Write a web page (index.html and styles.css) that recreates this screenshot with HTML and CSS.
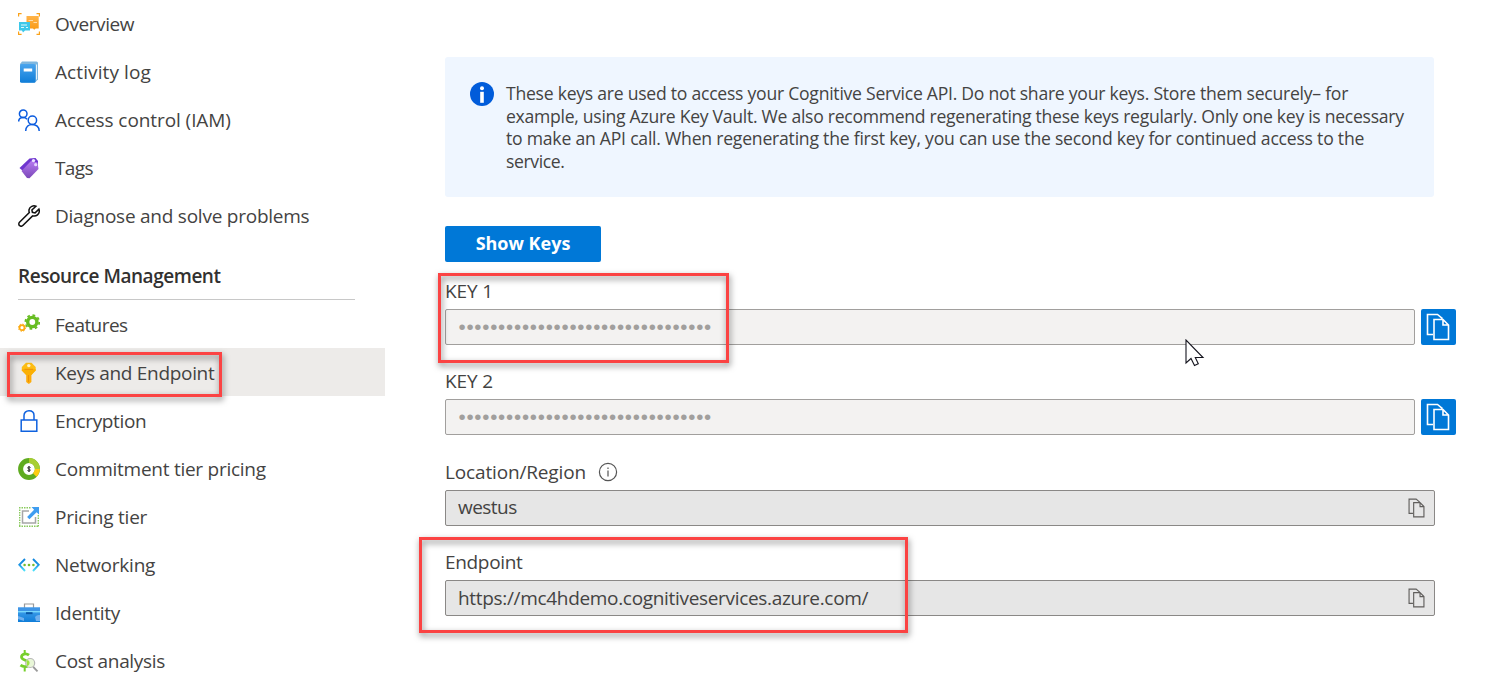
FILE: index.html
```html
<!DOCTYPE html>
<html lang="en">
<head>
<meta charset="utf-8">
<title>Keys and Endpoint</title>
<link rel="stylesheet" href="styles.css">
</head>
<body>
<svg class="defs" width="0" height="0">
  <defs>
    <linearGradient id="blue" x1="0" y1="0" x2="0" y2="1"><stop offset="0" stop-color="#4aa5ee"/><stop offset="1" stop-color="#0f7dd8"/></linearGradient>
    <linearGradient id="cyan" x1="0" y1="0" x2="0" y2="1"><stop offset="0" stop-color="#0f86dd"/><stop offset=".5" stop-color="#1f95e5"/><stop offset="1" stop-color="#4fe4fb"/></linearGradient>
    <linearGradient id="violet" x1="0" y1="0" x2="0" y2="1"><stop offset="0" stop-color="#b77af0"/><stop offset="1" stop-color="#7a48b8"/></linearGradient>
    <linearGradient id="gold" x1="0" y1="0" x2="0" y2="1"><stop offset="0" stop-color="#ffb44a"/><stop offset="1" stop-color="#fa9a14"/></linearGradient>
    <symbol id="copy" viewBox="0 0 24 28">
      <path d="M7 21.500H1.500V1.500h10l5 4.200M8 6.500h9l5.500 5.500v14.500H8zM17 6.500V12h5.500" fill="none" stroke="currentColor" stroke-width="1.600"/>
    </symbol>
  </defs>
</svg>
<div class="page">
  <nav class="sidebar">
    <div class="group group-top">
    <a class="item"><svg class="icon" viewBox="0 0 22 22"><path d="M.6 3.500V.6h3M18.500.6h2.900v2.900M21.400 18.500v2.900h-2.900M3.600 21.400h-3v-2.900" fill="none" stroke="#faa21b" stroke-width="1.200"/><path d="M8.500 3h12.200v12.500h-3l-1.500 1.300-1.200-1.300H8.500z" fill="url(#gold)"/><path d="M10.500 7.500h4.500M15.500 9.500h3.500" stroke="#ffdca8"/><path d="M1 9h11v8.500H7l-2 2-1-2H1z" fill="#3cc8e9"/><path d="M3 12h6M3 14.500h3M8 14.500h2" stroke="#d8f8ff"/></svg><span class="t-overview">Overview</span></a>
    <a class="item"><svg class="icon" viewBox="0 0 22 22"><path d="M4 .5h14.500a1.500 1.500 0 0 1 1.500 1.500v16.500L17 21.500H3.500L2 3z" fill="#7fb7df"/><path d="M18 3.500h1v15h-1z" fill="#e6f3fb"/><rect x="2" y="3" width="15.500" height="18.700" rx="1.500" fill="url(#blue)"/><rect x="5.700" y="7.500" width="8.500" height="3" fill="#fff"/></svg><span class="t-activity">Activity log</span></a>
    <a class="item"><svg class="icon" viewBox="0 0 22 22" fill="none" stroke="#0a5bdf" stroke-width="1.500"><circle cx="5.200" cy="4.800" r="3.800"/><path d="M.7 12.500c0-2.500 2-4 4.500-4 1.600 0 3 .6 3.800 1.700"/><circle cx="14.400" cy="11.200" r="4.200"/><path d="M7.700 21.900c0-4 3-6.500 6.700-6.500s6.800 2.500 6.800 6.500"/></svg><span class="t-access">Access control (IAM)</span></a>
    <a class="item"><svg class="icon" viewBox="0 0 22 22"><path d="M1.500 11 11.500 1.500 17.500 1 20 4v5L9 17.500z" fill="#6f35cf"/><path d="M3.500 14 13 4l6.500 1.500 1 6.500L11.500 21.300 9 21z" fill="url(#violet)"/><circle cx="15.500" cy="3.600" r="1.700" fill="#eee4ff"/><circle cx="17.700" cy="7.700" r="1.600" fill="#e7d6ff"/></svg><span class="t-tags">Tags</span></a>
    <a class="item"><svg class="icon" viewBox="0 0 22 22" fill="none" stroke="#111" stroke-width="1.500"><path d="M17.900 1.200C15.300.2 11.800 1.500 11.100 4.500c-.3 1.300-.1 2.200.2 3.100L1.500 17.300a2.300 2.300 0 0 0 0 3.300 2.300 2.300 0 0 0 3.300 0l9.800-9.700c3.800 1 7.100-2 6.700-5.500l-.4-1.300-3.800 3.800-2.700-.6-.5-2.400z"/></svg><span class="t-diagnose">Diagnose and solve problems</span></a>
    </div>
    <h2 class="heading"><span>Resource Management</span></h2>
    <div class="group group-resource">
    <a class="item"><svg class="icon" viewBox="0 0 22 22"><circle cx="14.300" cy="8" r="4.600" fill="none" stroke="#67bd22" stroke-width="3.400"/><circle cx="14.300" cy="8" r="6.900" fill="none" stroke="#67bd22" stroke-width="1.800" stroke-dasharray="2.710 2.710"/><circle cx="4" cy="13.700" r="2.500" fill="none" stroke="#fcab13" stroke-width="1.800"/><circle cx="4" cy="13.700" r="3.600" fill="none" stroke="#fcab13" stroke-width="1" stroke-dasharray="1.410 1.410"/></svg><span class="t-features">Features</span></a>
    <a class="item item-active"><svg class="icon" viewBox="0 0 22 22"><path d="M8.200 11h5.200v9l-2.600 2-2.600-2z" fill="#fdac0b"/><path d="M8 .8h5.500l4.200 4.200v3.500L13.400 13H8.200L3.800 8.500V5z" fill="#fdbd14"/><path d="M4 7h13.600v1.500L13.400 13H8.200L3.800 8.500z" fill="#fbb005"/><circle cx="10.800" cy="3.600" r="1.700" fill="#fff2c9"/><path d="M6.500 7.300h8.500" stroke="#ee9007" stroke-width="1"/><path d="M10.500 13v7" stroke="#ee9007" stroke-width="1"/></svg><span class="t-keys">Keys and Endpoint</span></a>
    <a class="item"><svg class="icon" viewBox="0 0 22 22" fill="none" stroke="#0f62df" stroke-width="1.500"><path d="M3.200 10h15.600v11.200H3.200zM6 10V5.600C6 2.700 8 .8 11 .8s5 1.900 5 4.800V10"/></svg><span class="t-encryption">Encryption</span></a>
    <a class="item"><svg class="icon" viewBox="0 0 22 22"><circle cx="11" cy="11" r="8.400" fill="#fff" stroke="#5fab20" stroke-width="5"/><path d="M11 2.600a8.400 8.400 0 0 1 8.400 8.400" fill="none" stroke="#a8ce32" stroke-width="5"/><path d="M19.400 11c0 2.500-1 4.500-2.700 6" fill="none" stroke="#fdcc12" stroke-width="5"/><path d="M12.500 9.500c-2.500-1.400-4.100.7-1.500 1.500s1 2.900-1.500 1.500M11 8v6" fill="none" stroke="#222" stroke-width="1"/></svg><span class="t-commit">Commitment tier pricing</span></a>
    <a class="item"><svg class="icon" viewBox="0 0 22 22"><path d="M1 1.700H13M1.700 1v20M1 20.300H21M20.300 9v12" fill="none" stroke="#8aca5e" stroke-width="1.400" stroke-dasharray="1.500 1"/><path d="M11 5H4.500v12h13v-6" fill="none" stroke="#a6a6a6" stroke-width="1.500"/><path d="M13.500 1H21v7.500l-2.400-2.300-7.200 7-2.300-2.300 7-7.100z" fill="#3f9df0"/></svg><span class="t-pricing">Pricing tier</span></a>
    <a class="item"><svg class="icon" viewBox="0 0 22 22"><path d="M7 5 1.300 10.800 7 17M15 5l5.700 5.800L15 17" fill="none" stroke="url(#cyan)" stroke-width="1.900"/><g fill="#76bc2d"><circle cx="6.600" cy="11" r="1.300"/><circle cx="11" cy="11" r="1.300"/><circle cx="15.400" cy="11" r="1.300"/></g></svg><span class="t-network">Networking</span></a>
    <a class="item"><svg class="icon" viewBox="0 0 22 22"><path d="M6.500 6V2h9v4" fill="none" stroke="#9a9a9a" stroke-width="1.200"/><path d="M0 5.500h22V20H0z" fill="url(#blue)"/><path d="M0 5.500h22V9H0z" fill="#3f95e6"/><path d="M0 9h22v1.400H0z" fill="#79d7fb"/><path d="M8 10.200h6.500v2H8z" fill="#0756a5"/><path d="m0 14 6 2v3l-6-2zM17 15c2-2 3-2 5-2v6h-4z" fill="#70b0ee"/></svg><span class="t-identity">Identity</span></a>
    <a class="item"><svg class="icon" viewBox="0 0 22 22"><path d="M11 5.200C8.500 3.200 3.500 3.500 3.500 7s7.500 3 7.500 6.500-5.500 4-8.500 1.700" fill="none" stroke="#76cf2c" stroke-width="2.800"/><path d="M6.700 0v3M6.700 18v3.500" stroke="#76cf2c" stroke-width="2"/><circle cx="12.200" cy="13" r="4.500" fill="#e9f7d8" stroke="#b8b8b8" stroke-width="1.200"/><path d="M8.500 10.500c4-1.500 4 5.500.5 5.500z" fill="#9be33f"/><path d="m15.200 16.800 4.300 4.500" stroke="#999" stroke-width="1.900"/></svg><span class="t-cost">Cost analysis</span></a>
    </div>
  </nav>
  <main class="main">
    <section class="notice">
      <svg class="notice-icon" viewBox="0 0 24 24"><circle cx="12" cy="12" r="12" fill="#015cda"/><circle cx="12" cy="6.200" r="2" fill="#fff"/><path d="M10.200 9.800h3.600v11h-3.600z" fill="#fff"/></svg>
      <p class="notice-text"><span class="l1">These keys are used to access your Cognitive Service API. Do not share your keys. Store them securely– for</span><br><span class="l2">example, using Azure Key Vault. We also recommend regenerating these keys regularly. Only one key is necessary</span><br><span class="l3">to make an API call. When regenerating the first key, you can use the second key for continued access to the</span><br><span class="l4">service.</span></p>
    </section>
    <button class="show-keys">Show Keys</button>
    <div class="field">
      <label class="label label-key">KEY 1</label>
      <div class="row"><div class="input secret">••••••••••••••••••••••••••••••••</div><button class="copy-button"><svg class="copy-large"><use href="#copy"/></svg></button></div>
    </div>
    <div class="field">
      <label class="label label-key">KEY 2</label>
      <div class="row"><div class="input secret">••••••••••••••••••••••••••••••••</div><button class="copy-button"><svg class="copy-large"><use href="#copy"/></svg></button></div>
    </div>
    <div class="field">
      <label class="label"><span class="t-location">Location/Region</span><svg class="hint" viewBox="0 0 20 20"><circle cx="10" cy="10" r="8.600" fill="none" stroke="#555" stroke-width="1.200"/><path d="M10 8.500v6M10 5.500v1.500" stroke="#555" stroke-width="1.200"/></svg></label>
      <div class="input readonly"><span class="t-west">westus</span><svg class="copy-small"><use href="#copy"/></svg></div>
    </div>
    <div class="field">
      <label class="label"><span class="t-endpoint">Endpoint</span></label>
      <div class="input readonly"><span class="t-url">https://mc4hdemo.cognitiveservices.azure.com/</span><svg class="copy-small"><use href="#copy"/></svg></div>
    </div>
  </main>
  <div class="mark mark-nav"></div>
  <div class="mark mark-key"></div>
  <div class="mark mark-endpoint"></div>
  <svg class="cursor" viewBox="0 0 20 28"><path d="M1 1v23l5-4.500 3.500 7 3.800-1.700L10.300 18.500H18z" fill="#fff" stroke="#15151f" stroke-width="1.100"/></svg>
</div>
</body>
</html>
```
FILE: styles.css
```css
* { box-sizing: border-box; }
body { margin: 0; background: #fff; color: #444342; font-family: "Open Sans", "Noto Sans", sans-serif; font-size: 19px; overflow: hidden; }
.defs { position: absolute; }
.page { position: relative; display: flex; height: 682px; overflow: hidden; }
.sidebar { width: 385px; flex: none; }
.item { display: flex; align-items: center; gap: 15px; height: 48px; padding-left: 18px; white-space: nowrap; }
.item-active { background: #edebe9; }
.icon { width: 22px; height: 22px; flex: none; }
.group-resource .item span { padding-top: 2px; }
.group-resource .icon { margin-top: 2px; }
.heading { display: flex; align-items: flex-end; height: 60px; width: 337px; margin: 0 0 0 18px; padding-bottom: 10px; border-bottom: 1px solid #c8c8c8; font-size: 19px; font-weight: 600; line-height: 26px; color: #323130; letter-spacing: -.460px; }
.main { padding: 57px 0 0 60px; }
.notice { display: flex; gap: 12px; width: 989px; height: 140px; padding: 25px 25px 0; border-radius: 3px; background: #eff6ff; }
.notice-icon { width: 24px; height: 24px; flex: none; }
.notice-text { margin: 0; font-size: 17.600px; line-height: 22.600px; white-space: nowrap; }
.show-keys { display: block; width: 156px; height: 36px; margin: 29px 0 11px; padding: 0 0 2px; border: 0; border-radius: 2px; background: #0078d7; color: #fff; font: 700 18px "Open Sans", sans-serif; }
.field { height: 90.330px; }
.label { display: flex; align-items: center; height: 36px; }
.label-key { letter-spacing: -.1px; }
.row { display: flex; gap: 6px; }
.input { display: flex; align-items: center; width: 970px; height: 36px; padding-left: 12px; border: 1px solid #a19f9d; border-radius: 2px; background: #f3f2f1; }
.secret { padding-left: 12.500px; color: #a19f9d; font: 20.500px "Liberation Sans", sans-serif; letter-spacing: .745px; }
.copy-button { display: flex; align-items: center; justify-content: center; width: 35px; height: 36px; padding: 0 1px 1px 0; border: 0; border-radius: 2px; background: #0078d7; color: #fff; }
.copy-large { width: 24px; height: 28px; }
.readonly { width: 990px; justify-content: space-between; padding-right: 9px; background: #e6e6e6; border-color: #8a8886; }
.copy-small { width: 17px; height: 20px; margin-top: 1px; color: #605e5c; }
.hint { width: 20px; height: 20px; margin-left: 12px; }

/* Tracking per label */
.t-overview { letter-spacing: -.4px; }
.t-activity { letter-spacing: .1px; }
.t-access { letter-spacing: -.080px; }
.t-tags { letter-spacing: -.6px; }
.t-diagnose { letter-spacing: -.240px; }
.t-features { letter-spacing: -.550px; }
.t-keys { letter-spacing: -.310px; }
.t-encryption { letter-spacing: -.350px; }
.t-commit { letter-spacing: -.260px; }
.t-pricing { letter-spacing: -.220px; }
.t-network { letter-spacing: -.220px; }
.t-identity { letter-spacing: -.250px; }
.t-cost { letter-spacing: -.320px; }
.t-location { letter-spacing: -.150px; }
.t-endpoint { letter-spacing: -.320px; }
.t-west { padding-bottom: 2px; letter-spacing: -.530px; }
.t-url { letter-spacing: -.320px; }
.l1 { letter-spacing: -.255px; }
.l2 { letter-spacing: -.285px; }
.l3 { letter-spacing: -.224px; }
.l4 { letter-spacing: -.4px; }

.mark { position: absolute; border: 3px solid #fb4343; filter: drop-shadow(1px 3px 3px rgba(0, 0, 0, .5)); }
.mark-nav { left: 7px; top: 352px; width: 215px; height: 45px; }
.mark-key { left: 438px; top: 273px; width: 291px; height: 90px; }
.mark-endpoint { left: 419px; top: 537px; width: 489px; height: 96px; }
.cursor { position: absolute; left: 1185px; top: 339px; width: 20px; height: 28px; }
```
